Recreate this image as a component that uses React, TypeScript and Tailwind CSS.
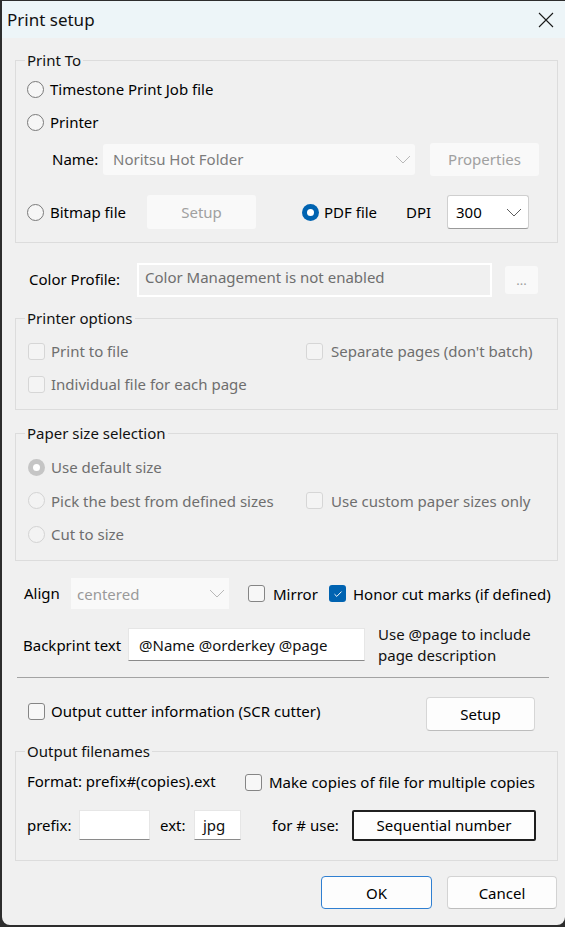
import type { ReactNode } from "react";

// Windows-style "Print setup" dialog.

const FONT = "font-['Noto_Sans','Open_Sans',sans-serif]";

function Radio({ checked = false, disabled = false }: { checked?: boolean; disabled?: boolean }) {
  if (checked) {
    return (
      <span
        className={`flex h-[17px] w-[17px] shrink-0 items-center justify-center rounded-full ${
          disabled ? "bg-[#c5c5c5]" : "bg-[#0063b1]"
        }`}
      >
        <span className="h-[7px] w-[7px] rounded-full bg-white" />
      </span>
    );
  }
  return (
    <span
      className={`h-[17px] w-[17px] shrink-0 rounded-full border ${
        disabled ? "border-[#d3d3d3] bg-[#f3f3f3]" : "border-[#7a7a7a] bg-[#f6f6f6]"
      }`}
    />
  );
}

function Check({ checked = false, disabled = false }: { checked?: boolean; disabled?: boolean }) {
  if (checked) {
    return (
      <span className="flex h-[17px] w-[17px] shrink-0 items-center justify-center rounded-[3px] bg-[#0063b1]">
        <svg width="10" height="8" viewBox="0 0 10 8" fill="none">
          <path d="M1.5 4.2 L3.8 6.4 L8.5 1.6" stroke="white" strokeWidth="1" />
        </svg>
      </span>
    );
  }
  return (
    <span
      className={`h-[17px] w-[17px] shrink-0 rounded-[3px] border ${
        disabled ? "border-[#d6d6d6] bg-[#f4f4f4]" : "border-[#858585] bg-[#f7f7f7]"
      }`}
    />
  );
}

function Chevron({ light = false }: { light?: boolean }) {
  return (
    <svg width="16" height="9" viewBox="0 0 16 9" fill="none">
      <path d="M1 1 L8 8 L15 1" stroke={light ? "#b8b8b8" : "#5c5c5c"} strokeWidth="1" />
    </svg>
  );
}

function Group({ title, className = "", children }: { title: string; className?: string; children: ReactNode }) {
  return (
    <fieldset className={`ml-[13px] w-[543px] border border-[#dcdcdc] ${className}`}>
      <legend className="ml-[9px] px-[2px] leading-[20px] text-[#111]">{title}</legend>
      {children}
    </fieldset>
  );
}

function FlatButton({ label, className = "" }: { label: string; className?: string }) {
  return (
    <span className={`flex items-center justify-center rounded-[3px] bg-[#f9f9f9] text-[#a0a0a0] ${className}`}>
      {label}
    </span>
  );
}

function Field({ value = "", className = "" }: { value?: string; className?: string }) {
  return (
    <span
      className={`flex items-center border border-[#e6e6e6] border-b-[#8a8a8a] bg-white pl-[10px] text-[#111] ${className}`}
    >
      {value}
    </span>
  );
}

export default function App() {
  return (
    <div className={`h-[927px] w-[565px] overflow-hidden bg-[#2d2d2d] pt-[1px] pl-[2px] text-[15px] leading-[20px] ${FONT}`}>
      <div className="flex h-[924px] w-[563px] flex-col rounded-b-[8px] bg-[#f0f0f0]">
        {/* title bar */}
        <div className="flex h-[37px] shrink-0 items-center justify-between bg-[#edf5f8] pl-[5px] pr-[11px]">
          <span className="text-[17px] text-[#111]">Print setup</span>
          <svg width="16" height="16" viewBox="0 0 16 16" fill="none">
            <path d="M1 1 L15 15 M15 1 L1 15" stroke="#1a1a1a" strokeWidth="1.1" />
          </svg>
        </div>

        {/* Print To */}
        <Group title="Print To" className="mt-[12px] pb-[13px]">
          <div className="flex h-[38px] items-center gap-[6px] pl-[11px]">
            <Radio />
            <span>Timestone Print Job file</span>
          </div>
          <div className="flex h-[28px] items-center gap-[6px] pl-[11px]">
            <Radio />
            <span>Printer</span>
          </div>
          <div className="flex h-[46px] items-center pl-[36px]">
            <span className="w-[51px]">Name:</span>
            <span className="flex h-[31px] w-[312px] items-center justify-between rounded-[3px] bg-[#f9f9f9] pl-[10px] pr-[4px] text-[#7c7c7c]">
              Noritsu Hot Folder
              <Chevron light />
            </span>
            <FlatButton label="Properties" className="ml-[15px] h-[33px] w-[109px]" />
          </div>
          <div className="mt-[13px] flex h-[34px] items-center pl-[11px]">
            <span className="flex w-[120px] items-center gap-[6px]">
              <Radio />
              <span>Bitmap file</span>
            </span>
            <FlatButton label="Setup" className="h-[34px] w-[109px]" />
            <span className="ml-[46px] flex w-[104px] items-center gap-[5px]">
              <Radio checked />
              <span>PDF file</span>
            </span>
            <span className="w-[41px]">DPI</span>
            <span className="flex h-[34px] w-[82px] items-center justify-between rounded-[3px] border border-[#cfcfcf] border-b-[#9a9a9a] bg-white pl-[8px] pr-[6px]">
              300
              <Chevron />
            </span>
          </div>
        </Group>

        {/* Color profile */}
        <div className="mt-[20px] flex h-[34px] items-center pl-[27px]">
          <span className="mb-[3px] w-[108px]">Color Profile:</span>
          <span className="h-[34px] w-[355px] border-2 border-white pl-[6px] pt-[2px] text-[#6e6e6e]">
            Color Management is not enabled
          </span>
          <FlatButton label="..." className="ml-[13px] h-[28px] w-[33px] text-[13px]" />
        </div>

        {/* Printer options */}
        <Group title="Printer options" className="mt-[11px] pb-[15px] text-[#6e6e6e]">
          <div className="flex h-[46px] items-center pl-[12px]">
            <span className="flex w-[278px] items-center gap-[6px]">
              <Check disabled />
              Print to file
            </span>
            <span className="flex items-center gap-[8px]">
              <Check disabled />
              Separate pages (don't batch)
            </span>
          </div>
          <div className="flex h-[20px] items-center gap-[6px] pl-[12px]">
            <Check disabled />
            Individual file for each page
          </div>
        </Group>

        {/* Paper size selection */}
        <Group title="Paper size selection" className="mt-[13px] pb-[9px] text-[#6e6e6e]">
          <div className="mt-[7px] flex h-[34px] items-center gap-[6px] pl-[12px]">
            <Radio checked disabled />
            Use default size
          </div>
          <div className="flex h-[33px] items-center pl-[12px]">
            <span className="flex w-[278px] items-center gap-[6px]">
              <Radio disabled />
              Pick the best from defined sizes
            </span>
            <span className="flex items-center gap-[8px]">
              <Check disabled />
              Use custom paper sizes only
            </span>
          </div>
          <div className="flex h-[34px] items-center gap-[6px] pl-[12px]">
            <Radio disabled />
            Cut to size
          </div>
        </Group>

        {/* Align */}
        <div className="mt-[17px] flex h-[31px] items-center pl-[22px]">
          <span className="mb-[2px] w-[47px]">Align</span>
          <span className="flex h-[31px] w-[158px] items-center justify-between bg-[#f9f9f9] pl-[6px] pr-[4px] text-[#9a9a9a]">
            centered
            <Chevron light />
          </span>
          <span className="ml-[19px] flex w-[81px] items-center gap-[8px]">
            <Check />
            Mirror
          </span>
          <span className="flex items-center gap-[7px]">
            <Check checked />
            Honor cut marks (if defined)
          </span>
        </div>

        {/* Backprint */}
        <div className="mt-[19px] flex h-[33px] items-center pl-[21px]">
          <span className="w-[105px]">Backprint text</span>
          <Field value="@Name @orderkey @page" className="h-[33px] w-[237px]" />
          <span className="ml-[13px] leading-[21px] text-[#111]">
            Use @page to include
            <br />
            page description
          </span>
        </div>

        <div className="ml-[15px] mt-[16px] h-[1px] w-[532px] bg-[#a3a3a3]" />

        {/* Cutter */}
        <div className="mt-[19px] flex h-[34px] items-center pl-[26px]">
          <span className="mb-[6px] flex w-[398px] items-center gap-[6px]">
            <Check />
            Output cutter information (SCR cutter)
          </span>
          <span className="flex h-[34px] w-[109px] items-center justify-center rounded-[4px] border border-[#d6d6d6] border-b-[#bdbdbd] bg-[#fdfdfd]">
            Setup
          </span>
        </div>

        {/* Output filenames */}
        <Group title="Output filenames" className="mt-[10px] pb-[19px]">
          <div className="mt-[7px] flex h-[28px] items-center pl-[11px]">
            <span className="mb-[2px] w-[218px]">Format: prefix#(copies).ext</span>
            <span className="flex items-center gap-[7px]">
              <Check />
              Make copies of file for multiple copies
            </span>
          </div>
          <div className="mt-[13px] flex h-[32px] items-center pl-[11px]">
            <span className="w-[52px]">prefix:</span>
            <Field className="h-[30px] w-[71px]" />
            <span className="ml-[10px] w-[34px]">ext:</span>
            <Field value="jpg" className="h-[30px] w-[47px] !pl-[8px]" />
            <span className="ml-[31px] w-[80px]">for # use:</span>
            <span className="flex h-[31px] w-[184px] items-center justify-center rounded-[2px] border-2 border-[#1f1f1f] bg-[#fdfdfd]">
              Sequential number
            </span>
          </div>
        </Group>

        {/* Dialog buttons */}
        <div className="mt-[15px] flex justify-end gap-[15px] pr-[8px]">
          <span className="flex h-[33px] w-[111px] items-center justify-center rounded-[4px] border border-[#2f7fd1] bg-[#fdfdfd]">
            OK
          </span>
          <span className="flex h-[33px] w-[110px] items-center justify-center rounded-[4px] border border-[#d3d3d3] border-b-[#bdbdbd] bg-[#fdfdfd]">
            Cancel
          </span>
        </div>
      </div>
    </div>
  );
}
